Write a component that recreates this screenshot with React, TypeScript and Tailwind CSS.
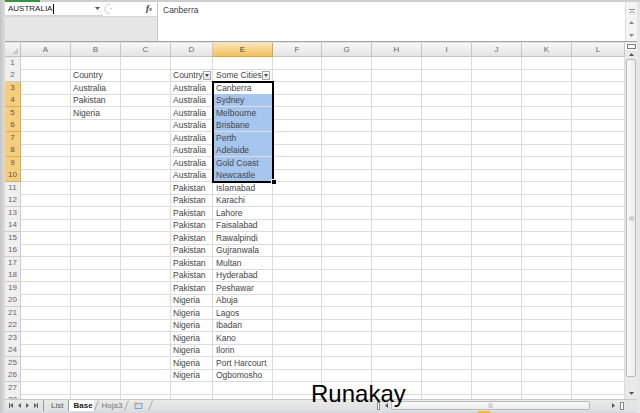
import React from "react";

const GRID =
  "grid grid-cols-[16px_50px_50px_50px_42px_60px_49px_50px_50px_50px_50px_50px_53px]";
const LETTERS = ["A", "B", "C", "D", "E", "F", "G", "H", "I", "J", "K", "L"];

type Row = { b?: string; d?: string; e?: string };
const data: Record<number, Row> = {};
data[2] = { b: "Country", d: "Country", e: "Some Cities" };
const aus = ["Canberra", "Sydney", "Melbourne", "Brisbane", "Perth", "Adelaide", "Gold Coast", "Newcastle"];
const pak = ["Islamabad", "Karachi", "Lahore", "Faisalabad", "Rawalpindi", "Gujranwala", "Multan", "Hyderabad", "Peshawar"];
const nig = ["Abuja", "Lagos", "Ibadan", "Kano", "Ilorin", "Port Harcourt", "Ogbomosho"];
aus.forEach((c, i) => (data[3 + i] = { d: "Australia", e: c }));
pak.forEach((c, i) => (data[11 + i] = { d: "Pakistan", e: c }));
nig.forEach((c, i) => (data[20 + i] = { d: "Nigeria", e: c }));
data[3].b = "Australia";
data[4].b = "Pakistan";
data[5].b = "Nigeria";

function FilterBtn({ mr }: { mr: string }) {
  return (
    <span
      className={`ml-auto flex h-[9px] w-[8px] shrink-0 items-center justify-center border border-[#a8a8a8] bg-gradient-to-b from-white to-[#e4e4e4] ${mr}`}
    >
      <svg width="4" height="3" viewBox="0 0 4 3">
        <path d="M0 0h4L2 3z" fill="#444" />
      </svg>
    </span>
  );
}

function Cell({ children, className = "" }: { children?: React.ReactNode; className?: string }) {
  return (
    <div
      className={`flex items-center overflow-hidden whitespace-nowrap border-r border-b border-[#dadcdd] text-[8.5px] text-[#454545] ${className}`}
    >
      {children}
    </div>
  );
}

function Tri({ dir, color = "#606060" }: { dir: "up" | "down" | "left" | "right"; color?: string }) {
  const d =
    dir === "up" ? "M0 3h5L2.5 0z" : dir === "down" ? "M0 0h5L2.5 3z" : dir === "left" ? "M3 0v5L0 2.5z" : "M0 0v5L3 2.5z";
  const w = dir === "up" || dir === "down" ? 5 : 3;
  const h = dir === "up" || dir === "down" ? 3 : 5;
  return (
    <svg width={w} height={h} viewBox={`0 0 ${w} ${h}`}>
      <path d={d} fill={color} />
    </svg>
  );
}

function Slant() {
  return (
    <svg width="5" height="11" viewBox="0 0 5 11" className="shrink-0">
      <path d="M0.5 10.5L4.5 0.5" stroke="#9a9a9a" strokeWidth="0.8" fill="none" />
    </svg>
  );
}

export default function App() {
  const rows = Array.from({ length: 28 }, (_, i) => i + 1);
  return (
    <div className="relative flex h-[413px] w-[640px] flex-col overflow-hidden bg-[#d9d9d9] font-['Liberation_Sans',Arial,sans-serif]">
      {/* top strip */}
      <div className="flex h-[2px] bg-[#cfcfcf]">
        <div className="ml-[5px] w-[35px] bg-[#3a9141]" />
      </div>
      <div className="flex min-h-0 flex-1">
        {/* left window border */}
        <div className="w-[5px] bg-gradient-to-r from-[#c4c4c4] to-[#dedede]" />
        {/* main column */}
        <div className="flex w-[632px] flex-col">
          {/* formula bar */}
          <div className="flex h-[39px] bg-white">
            <div className="flex w-[152px] flex-col">
              <div className="flex h-[14px] items-center bg-white">
                <div className="flex h-[14px] w-[98px] items-center border-b border-[#d4d4d4] pl-[3px] text-[8px] text-[#222]">
                  <span>AUSTRALIA</span>
                  <span className="ml-[1px] h-[10px] w-px bg-black" />
                  <span className="ml-auto mr-[3px] flex">
                    <Tri dir="down" color="#555" />
                  </span>
                </div>
                <svg width="12" height="12" viewBox="0 0 12 12" className="ml-[1px]">
                  <path d="M6 1A5 5 0 0 0 6 11" stroke="#c8c8c8" strokeWidth="1" fill="none" />
                  <path d="M6 5.5h2" stroke="#d0d0d0" strokeWidth="1" />
                </svg>
                <span className="ml-auto mr-[5px] text-[9px] font-bold italic text-[#333] font-['Liberation_Serif',serif]">
                  f<span className="text-[6px]">x</span>
                </span>
              </div>
              <div className="h-[25px] border-t border-[#d8d8d8] bg-[#e6e6e6]" />
            </div>
            <div className="w-[468px] border-l border-[#c8c8c8] pl-[5px] pt-[2px] text-[8.5px] text-[#404040]">
              Canberra
            </div>
            <div className="flex w-[12px] flex-col items-center border-l border-[#dcdcdc] bg-[#f4f4f4] pt-[7px]">
              <svg width="6" height="5" viewBox="0 0 6 5">
                <path d="M0 0.5h6" stroke="#777" strokeWidth="0.8" />
                <path d="M0.5 4.5L3 2L5.5 4.5" stroke="#777" strokeWidth="0.8" fill="none" />
              </svg>
              <div className="mt-[7px]">
                <Tri dir="up" color="#8a8a8a" />
              </div>
              <div className="mt-[10px]">
                <Tri dir="down" color="#8a8a8a" />
              </div>
            </div>
          </div>
          {/* separator */}
          <div className="h-[2px] border-t border-[#a5a5a5] bg-[#e2e2e2]" />
          {/* grid area */}
          <div className="flex h-[356px]">
            <div className="relative w-[620px] overflow-hidden bg-white">
              {/* column header */}
              <div className={`${GRID} h-[14px]`}>
                <div className="relative border-r border-b border-[#c0c0c0] bg-gradient-to-b from-[#f6f6f6] to-[#e4e4e4]">
                  <svg width="6" height="6" viewBox="0 0 6 6" className="absolute right-[2px] bottom-[2px]">
                    <path d="M6 0V6H0z" fill="#c9c9c9" />
                  </svg>
                </div>
                {LETTERS.map((l) =>
                  l === "E" ? (
                    <div
                      key={l}
                      className="flex items-center justify-center border-r border-b border-[#d9a441] bg-gradient-to-b from-[#fbe5b4] to-[#f2c15e] text-[8px] text-[#444]"
                    >
                      {l}
                    </div>
                  ) : (
                    <div
                      key={l}
                      className="flex items-center justify-center border-r border-b border-[#c5c5c5] bg-gradient-to-b from-[#f7f7f7] to-[#e4e4e4] text-[8px] text-[#666]"
                    >
                      {l}
                    </div>
                  )
                )}
              </div>
              {rows.map((r) => {
                const row = data[r] || {};
                const sel = r >= 3 && r <= 10;
                const blue = r >= 4 && r <= 10;
                return (
                  <div key={r} className={`${GRID} ${r % 2 === 0 ? "h-[13px]" : "h-[12px]"}`}>
                    <div
                      className={`flex items-center justify-center border-r border-b text-[8px] ${
                        sel
                          ? "border-[#dcae5a] bg-[#f6cd7b] text-[#555]"
                          : "border-[#cdcdcd] bg-[#efefef] text-[#666]"
                      }`}
                    >
                      {r}
                    </div>
                    <Cell />
                    <Cell className="pl-[2px]">{row.b}</Cell>
                    <Cell />
                    <Cell className="pl-[2px]">
                      {row.d}
                      {r === 2 && <FilterBtn mr="mr-[1px]" />}
                    </Cell>
                    <Cell className={`pl-[3px] ${blue ? "bg-[#a7c6ee]" : ""}`}>
                      {row.e}
                      {r === 2 && <FilterBtn mr="mr-[2px]" />}
                    </Cell>
                    <Cell />
                    <Cell />
                    <Cell />
                    <Cell />
                    <Cell />
                    <Cell />
                    <Cell />
                  </div>
                );
              })}
              {/* selection border */}
              <div className="pointer-events-none absolute left-[207px] top-[38px] h-[102px] w-[62px] border-2 border-black" />
              <div className="absolute left-[266px] top-[136px] h-[6px] w-[6px] border border-white bg-black" />
            </div>
            {/* vertical scrollbar */}
            <div className="flex w-[12px] flex-col bg-[#e9e9e9]">
              <div className="flex h-[7px] items-center justify-center bg-white">
                <div className="h-[5px] w-[9px] border border-[#7a7a7a] bg-white" />
              </div>
              <div className="flex h-[9px] items-center justify-center">
                <Tri dir="up" color="#555" />
              </div>
              <div className="flex flex-1 flex-col px-[1px]">
                <div className="flex h-[318px] items-center justify-center rounded-[2px] border border-[#b9b9b9] bg-gradient-to-r from-[#f9f9f9] to-[#ededed]">
                  <svg width="5" height="5" viewBox="0 0 5 5">
                    <path d="M0 1h5M0 2.5h5M0 4h5" stroke="#a8a8a8" strokeWidth="0.7" />
                  </svg>
                </div>
              </div>
              <div className="flex h-[12px] items-center justify-center">
                <Tri dir="down" color="#555" />
              </div>
            </div>
          </div>
          {/* tab bar + horizontal scrollbar */}
          <div className="flex h-[12px] border-t border-[#c8c8c8] bg-gradient-to-b from-[#eaeaea] to-[#dfdfdf]">
            <div className="flex w-[370px] items-center text-[8px]">
              <div className="flex w-[36px] items-center justify-around pl-[1px]">
                <span className="flex items-center">
                  <span className="h-[5px] w-px bg-[#606060]" />
                  <Tri dir="left" />
                </span>
                <Tri dir="left" />
                <Tri dir="right" />
                <span className="flex items-center">
                  <Tri dir="right" />
                  <span className="h-[5px] w-px bg-[#606060]" />
                </span>
              </div>
              <div className="ml-[2px] flex h-full items-stretch">
                <div className="flex items-center border-l border-[#9a9a9a] pl-[7px] pr-[5px] text-[#555]">List</div>
                <div className="flex items-center border-l border-[#9a9a9a] bg-white pl-[4px] pr-[1px] font-bold text-[#222]">
                  Base
                </div>
                <Slant />
                <div className="flex items-center pl-[3px] pr-[2px] text-[#777]">Hoja3</div>
                <Slant />
                <div className="flex items-center px-[5px]">
                  <svg width="9" height="7" viewBox="0 0 9 7">
                    <rect x="1" y="1.5" width="7" height="5" fill="#cfe0f4" stroke="#6c8fbf" strokeWidth="0.8" />
                    <circle cx="2" cy="1.5" r="1.3" fill="#f0a020" />
                  </svg>
                </div>
                <Slant />
              </div>
            </div>
            <div className="flex w-[250px] items-center">
              <div className="flex w-[6px] justify-center">
                <div className="h-[8px] w-[3px] border border-[#8a8a8a] bg-white" />
              </div>
              <div className="flex w-[10px] justify-center">
                <Tri dir="left" color="#555" />
              </div>
              <div className="flex h-[9px] flex-1 items-center">
                <div className="flex h-[9px] w-[199px] items-center justify-center rounded-[2px] border border-[#b9b9b9] bg-gradient-to-b from-[#fafafa] to-[#ebebeb]">
                  <svg width="5" height="5" viewBox="0 0 5 5">
                    <path d="M1 0v5M2.5 0v5M4 0v5" stroke="#b0b0b0" strokeWidth="0.7" />
                  </svg>
                </div>
              </div>
              <div className="flex w-[10px] justify-center">
                <Tri dir="right" color="#555" />
              </div>
              <div className="flex w-[7px] justify-center">
                <div className="h-[8px] w-[4px] border border-[#8a8a8a] bg-white" />
              </div>
            </div>
            <div className="w-[12px] bg-[#e4e4e4]" />
          </div>
          {/* status strip */}
          <div className="flex h-[2px] bg-[#d6dbe1]">
            <div className="ml-[473px] w-[12px] bg-[#f3b73c]" />
          </div>
        </div>
        {/* right window border */}
        <div className="w-[3px] bg-[#e6e6e6]" />
      </div>
      {/* watermark */}
      <div className="pointer-events-none absolute left-[311px] top-[382px] text-[24px] leading-[24px] text-black">
        Runakay
      </div>
    </div>
  );
}
